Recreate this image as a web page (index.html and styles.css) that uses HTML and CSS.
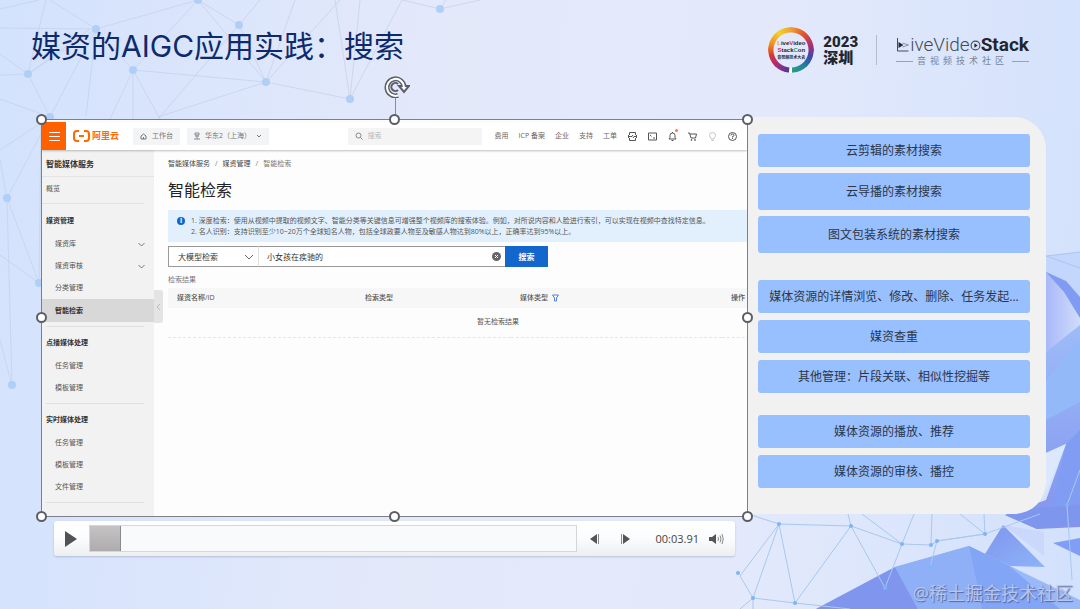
FILE: index.html
```
<!DOCTYPE html>
<html lang="zh-CN">
<head>
    <meta charset="UTF-8">
    <meta name="viewport" content="width=device-width, initial-scale=1">
    <title>媒资的AIGC应用实践：搜索</title>
    <link rel="stylesheet" href="styles.css">
</head>
<body>
    <!-- 背景装饰 -->
    <svg class="backdrop" viewBox="0 0 1080 609" preserveAspectRatio="none" aria-hidden="true">
        <defs>
            <linearGradient id="poly1" x1="0" y1="0" x2="1" y2="1">
                <stop offset="0" stop-color="#8094ee"/>
                <stop offset="1" stop-color="#8db4f8"/>
            </linearGradient>
            <linearGradient id="poly2" x1="0" y1="0" x2="1" y2="0">
                <stop offset="0" stop-color="#a9b9f7"/>
                <stop offset="1" stop-color="#d0dcfb"/>
            </linearGradient>
            <linearGradient id="poly3" x1="0" y1="0" x2="0" y2="1">
                <stop offset="0" stop-color="#9dbcf8"/>
                <stop offset="1" stop-color="#8393ee"/>
            </linearGradient>
        </defs>
        <g class="net">
            <path d="M0 9L39 0M0 28L96 29L198 0M96 29L50 0M96 29L133 70M96 29L28 74L46 0M28 74L0 75M28 74L0 54M28 74L50 117L0 99M28 74L90 29M96 29L52 113M86 116L96 29M133 70L110 119M133 70V119M133 70L160 119M133 70L266 82L350 99L335 0M198 0L239 25L158 119M239 25L260 0M198 0L133 70M239 25L266 82L295 0M266 82L340 0M266 82L158 117M350 99L360 0M350 99L402 0M266 82L198 0M402 0L440 9L480 0M440 9L446 0M50 117L0 150M50 117L7 198L0 160M7 198L39 283L0 255M7 198L12 385L0 340M39 283L41 119"/>
        </g>
        <g class="net-dot">
            <circle cx="198" cy="0" r="4"/><circle cx="96" cy="29" r="4"/><circle cx="239" cy="25" r="4"/>
            <circle cx="28" cy="74" r="4"/><circle cx="133" cy="70" r="4"/><circle cx="266" cy="82" r="4"/>
            <circle cx="350" cy="99" r="4"/><circle cx="50" cy="117" r="4"/><circle cx="440" cy="9" r="4"/>
            <circle cx="7" cy="198" r="4"/><circle cx="39" cy="283" r="4"/><circle cx="12" cy="385" r="4"/>
        </g>
        <g>
            <path fill="#c3d6fb" d="M1046 256L1080 252V360L1046 352Z"/>
            <path fill="url(#poly2)" d="M1046 272L1062 280L1080 300V330L1046 352Z"/>
            <path fill="#7f9cf2" d="M1046 272L1066 281L1080 297V318L1064 292Z"/>
            <path fill="url(#poly3)" d="M1046 352L1080 325V527L1037 529L1005 515L1046 500L1066 444L1046 453Z"/>
            <path fill="#94b9f9" d="M1046 380L1080 340V402L1046 420Z"/>
            <path fill="#809df3" d="M1066 444L1080 430V500L1050 516Z"/>
            <path fill="#dbe8fd" d="M1046 453L1066 444L1046 492Z"/>
            <path fill="#7f96ee" d="M1005 515L1037 529L1080 522V505L1040 508Z"/>
            <path fill="#7e9ff5" d="M1053 543L1080 538V556Z"/>
            <path fill="#9ab9f9" d="M816 609L895 567L969 546L1008 565L1080 600V609Z"/>
            <path fill="#8096ee" d="M816 609L895 567L918 609Z"/>
            <path fill="#8fb0f7" d="M895 567L969 546L982 609H918Z"/>
            <path fill="#83a5f5" d="M969 546L1008 565L1060 609H982Z"/>
            <path fill="url(#poly1)" d="M1003 525L1045 567L1010 566L985 554Z"/>
            <path fill="#c9d8fb" d="M1003 525L1044 532V556Z"/>
        </g>
        <g class="mesh">
            <path d="M1080 252L1046 256M1080 268L1046 256M779 524L851 526L902 544L931 545L937 541L985 534L960 514M779 524L795 603L851 526L885 588M779 524L740 576L753 598V609M753 598L795 603L850 609M753 598L740 609M851 526L848 514M902 544L862 514M902 544L914 514M931 545L932 514M985 534L984 514M985 534L937 541L930 567M985 534L1040 514M902 544L885 588M937 541L931 545M753 598L779 524L748 514M1067 505L1072 580M1067 505L1080 470"/>
        </g>
        <g class="mesh-dot">
            <circle cx="779" cy="524" r="2"/><circle cx="851" cy="526" r="2"/><circle cx="902" cy="544" r="2"/>
            <circle cx="931" cy="545" r="2"/><circle cx="937" cy="541" r="2"/><circle cx="985" cy="534" r="2"/>
            <circle cx="930" cy="567" r="2"/><circle cx="885" cy="588" r="2"/><circle cx="753" cy="598" r="2"/>
            <circle cx="795" cy="603" r="2"/><circle cx="738" cy="573" r="2"/><circle cx="1067" cy="505" r="2"/>
        </g>
    </svg>

    <div class="slide">
        <header class="slide-header">
            <h1>媒资的AIGC应用实践：搜索</h1>
            <div class="brands">
                <div class="con-logo">
                    <span class="ring"></span>
                    <span class="con-text"><i class="c1">L</i>ive<i class="c2">V</i>ideo<br><i class="c3">S</i>tack<i class="c4">C</i>on<br><small>音视频技术大会</small></span>
                </div>
                <div class="year">2023<br>深圳</div>
                <div class="lvs">
                    <div class="lvs-name">
                        <svg width="14" height="14" viewBox="0 0 13 14" fill="none" stroke="#444b5a">
                            <path d="M1 0V13H12"/>
                            <path d="M2 4L7 7L2 10Z" fill="#222936" stroke="none"/>
                            <path d="M6 5L12 7L6 9" stroke="#8a92a2"/>
                        </svg>
                        <span>iveVide</span>
                        <svg width="11" height="11" viewBox="0 0 10 10" fill="none" stroke="#444b5a">
                            <circle cx="5" cy="5" r="4"/>
                            <path d="M4 3L7 5L4 7Z" fill="#222936" stroke="none"/>
                        </svg>
                        <b>Stack</b>
                    </div>
                    <div class="lvs-sub">音视频技术社区</div>
                </div>
            </div>
        </header>

        <main class="slide-body">
            <section class="video">
                <div class="frame">
                    <div class="app">
                        <div class="topbar">
                            <button class="menu" aria-label="菜单"><i></i><i></i><i></i></button>
                            <a href="#" class="aliyun">
                                <svg width="17" height="12" viewBox="0 0 17 12" fill="none" stroke="#ff6a00" stroke-width="2">
                                    <path d="M6 1H4Q1 1 1 4V8Q1 11 4 11H6M11 1H13Q16 1 16 4V8Q16 11 13 11H11M6 6H11"/>
                                </svg>
                                阿里云
                            </a>
                            <button class="chip">
                                <svg width="7" height="7" viewBox="0 0 7 7" fill="none" stroke="#777"><path d="M1 3L3.500 1L6 3V6H1ZM3.500 4V6"/></svg>
                                工作台
                            </button>
                            <button class="chip region">
                                <svg width="6" height="8" viewBox="0 0 6 8" fill="none" stroke="#888"><path d="M1 1H5V3H1ZM1 4H5M3 4V7M0 7H6"/></svg>
                                华东2（上海）
                                <svg width="6" height="4" viewBox="0 0 6 4" fill="none" stroke="#777"><path d="M1 1L3 3L5 1"/></svg>
                            </button>
                            <label class="top-search">
                                <svg width="8" height="8" viewBox="0 0 8 8" fill="none" stroke="#888"><circle cx="3.500" cy="3.500" r="2.500"/><path d="M5.500 5.500L7.500 7.500"/></svg>
                                <input type="text" placeholder="搜索" aria-label="搜索">
                            </label>
                            <nav class="top-links">
                                <a href="#">费用</a>
                                <a href="#">ICP 备案</a>
                                <a href="#">企业</a>
                                <a href="#">支持</a>
                                <a href="#">工单</a>
                            </nav>
                            <div class="top-icons">
                                <svg viewBox="0 0 9 9"><path d="M1.500 3V.5H7.500V3M1.500 6V8.500H7.500V6M0 4.500H4L5 3M9 4.500H6L5 6M.5 3V6M8.500 3V6"/></svg>
                                <svg viewBox="0 0 9 9"><path d="M.5 1H8.500V8H.5ZM2 3L3.500 4.500M5 6H7"/></svg>
                                <span class="bell"><svg viewBox="0 0 9 9"><path d="M4.500 0V1M1 7H8L7 5.500V3.500Q7 1 4.500 1Q2 1 2 3.500V5.500ZM3.500 8.500H5.500"/></svg></span>
                                <svg viewBox="0 0 9 9"><path d="M0 1H1.500L3 6H7.500L8.500 2H2"/><circle cx="3.500" cy="8" r=".5"/><circle cx="7" cy="8" r=".5"/></svg>
                                <svg class="pale" viewBox="0 0 9 9"><path d="M3 6Q1.500 5 1.500 3.500Q1.500 .5 4.500 .5Q7.500 .5 7.500 3.500Q7.500 5 6 6V7H3ZM3.500 8.500H5.500"/></svg>
                                <svg viewBox="0 0 9 9"><circle cx="4.500" cy="4.500" r="4"/><path d="M3 3.500Q3 2 4.500 2Q6 2 6 3.500Q6 4.500 4.500 4.500V5.500M4.500 6V7"/></svg>
                            </div>
                        </div>

                        <div class="app-body">
                            <aside class="sidebar">
                                <h2>智能媒体服务</h2>
                                <a href="#" class="overview">概览</a>
                                <div class="side-group">
                                    <h3>媒资管理</h3>
                                    <a href="#">媒资库 <svg width="7" height="5" viewBox="0 0 7 5"><path d="M.5 1L3.500 4L6.500 1"/></svg></a>
                                    <a href="#">媒资审核 <svg width="7" height="5" viewBox="0 0 7 5"><path d="M.5 1L3.500 4L6.500 1"/></svg></a>
                                    <a href="#">分类管理</a>
                                    <a href="#" class="active">智能检索</a>
                                </div>
                                <div class="side-group">
                                    <h3>点播媒体处理</h3>
                                    <a href="#">任务管理</a>
                                    <a href="#">模板管理</a>
                                </div>
                                <div class="side-group">
                                    <h3>实时媒体处理</h3>
                                    <a href="#">任务管理</a>
                                    <a href="#">模板管理</a>
                                    <a href="#">文件管理</a>
                                </div>
                                <button class="collapse" aria-label="收起">
                                    <svg width="5" height="8" viewBox="0 0 5 8"><path d="M4 1L1 4L4 7"/></svg>
                                </button>
                            </aside>

                            <div class="content">
                                <nav class="crumbs"><a href="#">智能媒体服务</a><span>/</span><a href="#">媒资管理</a><span>/</span>智能检索</nav>
                                <h2>智能检索</h2>
                                <div class="notice">
                                    <span class="info">i</span>
                                    <p>1. 深度检索：使用从视频中提取的视频文字、智能分类等关键信息可增强整个视频库的搜索体验。例如，对所说内容和人脸进行索引，可以实现在视频中查找特定信息。<br>2. 名人识别：支持识别至少10~20万个全球知名人物，包括全球政要人物至及敏感人物达到80%以上，正确率达到95%以上。</p>
                                </div>
                                <form class="query">
                                    <select aria-label="检索方式"><option>大模型检索</option></select>
                                    <div class="query-box">
                                        <input type="text" value="小女孩在疾驰的" aria-label="检索内容">
                                        <button type="reset" aria-label="清空">
                                            <svg width="9" height="9" viewBox="0 0 9 9"><circle cx="4.500" cy="4.500" r="4.500" fill="#666"/><path d="M3 3L6 6M6 3L3 6" stroke="#fff"/></svg>
                                        </button>
                                    </div>
                                    <button type="button" class="go">搜索</button>
                                </form>
                                <p class="result-label">检索结果</p>
                                <table>
                                    <thead>
                                        <tr>
                                            <th class="col-name">媒资名称/ID</th>
                                            <th class="col-kind">检索类型</th>
                                            <th class="col-media">媒体类型 <svg width="7" height="8" viewBox="0 0 7 8"><path d="M.5 1H6.500L4.500 4V7H2.500V4Z"/></svg></th>
                                            <th>操作</th>
                                        </tr>
                                    </thead>
                                    <tbody>
                                        <tr><td colspan="4">暂无检索结果</td></tr>
                                    </tbody>
                                </table>
                            </div>
                        </div>
                    </div>

                    <!-- 选中框控制点 -->
                    <i class="stem"></i>
                    <svg class="rotate" width="26" height="22" viewBox="0 0 26 22" fill="none">
                        <path d="M20 11A8.500 8.500 0 1 0 14 19.500" stroke="#5b5e66" stroke-width="5"/>
                        <path d="M15 10L25 10L20 16Z" fill="#fff" stroke="#5b5e66" stroke-width="2"/>
                        <path d="M20 11A8.500 8.500 0 1 0 14 19.500" stroke="#fff" stroke-width="2"/>
                        <path d="M14 8A4 4 0 1 0 14 14" stroke="#5b5e66" stroke-width="2"/>
                    </svg>
                    <i class="handle t l"></i><i class="handle t c"></i><i class="handle t r"></i>
                    <i class="handle m l"></i><i class="handle m r"></i>
                    <i class="handle b l"></i><i class="handle b c"></i><i class="handle b r"></i>
                </div>

                <div class="player">
                    <button aria-label="播放"><svg width="14" height="18" viewBox="0 0 14 18"><path d="M1 1L13 9L1 17Z" fill="#505256"/></svg></button>
                    <div class="track"><div class="played"></div></div>
                    <button class="step" aria-label="上一帧"><svg width="10" height="10" viewBox="0 0 10 10"><path d="M0 5L7 0V10Z" fill="#555"/><path d="M8.500 0V10" stroke="#888"/></svg></button>
                    <button class="step" aria-label="下一帧"><svg width="10" height="10" viewBox="0 0 10 10"><path d="M10 5L3 0V10Z" fill="#555"/><path d="M1.500 0V10" stroke="#888"/></svg></button>
                    <span class="time">00:03.91</span>
                    <button aria-label="音量"><svg width="15" height="12" viewBox="0 0 15 12" fill="none" stroke="#888"><path d="M0 4H3L7 1V11L3 8H0Z" fill="#555" stroke="none"/><path d="M9 4Q10 6 9 8M11 2.500Q13 6 11 9.500M13 1Q15.500 6 13 11"/></svg></button>
                </div>
            </section>

            <aside class="panel">
                <ul class="dense">
                    <li>云剪辑的素材搜索</li>
                    <li class="tall">云导播的素材搜索</li>
                    <li class="tall">图文包装系统的素材搜索</li>
                </ul>
                <ul>
                    <li>媒体资源的详情浏览、修改、删除、任务发起...</li>
                    <li>媒资查重</li>
                    <li>其他管理：片段关联、相似性挖掘等</li>
                </ul>
                <ul>
                    <li>媒体资源的播放、推荐</li>
                    <li>媒体资源的审核、播控</li>
                </ul>
            </aside>
        </main>

        <div class="watermark">@稀土掘金技术社区</div>
    </div>
</body>
</html>
```
FILE: styles.css
```
* {
    box-sizing: border-box;
    margin: 0;
    padding: 0;
}
body {
    font-family: "Open Sans", "Noto Sans CJK SC", sans-serif;
    min-height: 100vh;
    background: linear-gradient(95deg, #d3e2fd, #e4e9fa 40%, #e3e9fb 70%, #d2e1fc);
    color: #333;
    position: relative;
    overflow: hidden;
}
button,
input,
select {
    font: inherit;
    color: inherit;
    border: none;
    background: none;
    outline: none;
}
a {
    color: inherit;
    text-decoration: none;
}
ul {
    list-style: none;
}
svg {
    display: block;
    flex: none;
}

/* 背景 */
.backdrop {
    position: absolute;
    inset: 0;
    width: 100%;
    height: 100%;
}
.net {
    fill: none;
    stroke: #c3d0e8;
    stroke-opacity: 0.7;
}
.net-dot {
    fill: #b0cff8;
}
.mesh {
    fill: none;
    stroke: #a9c8ee;
}
.mesh-dot {
    fill: #7cb5f5;
}

.slide {
    position: relative;
    min-height: 100vh;
    display: flex;
    flex-direction: column;
}

/* 页眉 */
.slide-header {
    display: flex;
    justify-content: space-between;
    height: 117px;
    padding: 24px 51px 0 31px;
}
.slide-header h1 {
    font-family: "Inter", "Noto Sans CJK SC", sans-serif;
    font-size: 30px;
    line-height: 44px;
    font-weight: 400;
    color: #0d2a6c;
}
.brands {
    display: flex;
    align-items: center;
    height: 52px;
}
.con-logo {
    position: relative;
    width: 46px;
    height: 46px;
    display: flex;
    align-items: center;
    justify-content: center;
}
.ring {
    position: absolute;
    inset: 0;
    border-radius: 50%;
    background: conic-gradient(#f0a030, #e0502c 40deg, #a0307c 80deg, #3a4aa8 110deg, #1f86a0 145deg, #2c9c80 176deg, #fff 177deg, #fff 184deg, #4d3a98 186deg, #a82c7c 225deg, #d8382c 255deg, #f08a20 285deg, #f2d22c 325deg, #f0a030);
    -webkit-mask: radial-gradient(circle, transparent 17px, #000 18px);
    mask: radial-gradient(circle, transparent 17px, #000 18px);
}
.con-text {
    font: 700 6px/7px "Liberation Sans", sans-serif;
    text-align: center;
    color: #1f2630;
}
.con-text i {
    font-style: normal;
}
.con-text small {
    display: block;
    font: 700 4px/6px "Noto Sans CJK SC", sans-serif;
}
.c1 { color: #f0a030; }
.c2 { color: #d8382c; }
.c3 { color: #c02c5c; }
.c4 { color: #2c9c80; }
.year {
    margin-left: 9px;
    font: 900 15px/16px "Roboto", "Noto Sans CJK SC", sans-serif;
    color: #1f2630;
    white-space: nowrap;
}
.lvs {
    margin-left: 18px;
    padding-left: 19px;
    border-left: 1px solid #b2bccd;
    height: 30px;
}
.lvs-name {
    display: flex;
    align-items: center;
    font: 300 19px/20px "Roboto", sans-serif;
    color: #444b5a;
}
.lvs-name b {
    font-weight: 700;
    color: #1f2630;
}
.lvs-sub {
    display: flex;
    align-items: center;
    gap: 4px;
    font-size: 9px;
    line-height: 12px;
    letter-spacing: 4px;
    white-space: nowrap;
    color: #7a8496;
}
.lvs-sub::before,
.lvs-sub::after {
    content: "";
    flex: 1;
    border-top: 1px solid #98a2b4;
}

/* 主体 */
.slide-body {
    display: grid;
    grid-template-columns: 1fr 298px;
    align-items: start;
    padding: 0 34px 0 41px;
}
.video {
    position: relative;
    z-index: 1;
    padding-top: 2px;
}
.frame {
    position: relative;
    aspect-ratio: 707 / 398;
    border: 1px solid #7d8088;
    background: #fdfdfd;
}
.app {
    height: 100%;
    padding-top: 2px;
    display: flex;
    flex-direction: column;
    overflow: hidden;
    font-size: 7px;
    line-height: 12px;
    color: #555;
}
.topbar {
    display: flex;
    align-items: center;
    flex: none;
    height: 28px;
    padding-right: 10px;
    background: #fff;
    box-shadow: 0 1px 2px rgba(0, 0, 0, 0.25);
    position: relative;
    z-index: 1;
}
.menu {
    width: 24px;
    height: 28px;
    display: flex;
    flex-direction: column;
    align-items: center;
    justify-content: center;
    gap: 3px;
    background: #ff6000;
}
.menu i {
    width: 11px;
    height: 1px;
    background: #fff;
}
.aliyun {
    display: flex;
    align-items: center;
    gap: 2px;
    margin: 0 14px 0 7px;
    font-size: 9px;
    font-weight: 700;
    color: #ff6a00;
}
.chip {
    display: flex;
    align-items: center;
    gap: 5px;
    height: 17px;
    padding: 0 7px;
    margin-right: 7px;
    background: #f3f4f5;
    color: #777;
    white-space: nowrap;
}
.top-search {
    display: flex;
    align-items: center;
    gap: 5px;
    width: 134px;
    height: 17px;
    padding: 0 7px;
    margin-left: auto;
    background: #f4f4f5;
}
.top-search input {
    width: 100%;
}
.top-search input::placeholder {
    color: #bbb;
}
.top-links {
    display: flex;
    gap: 10px;
    margin: 0 11px 0 13px;
    white-space: nowrap;
    color: #666;
}
.top-icons {
    display: flex;
    align-items: center;
    gap: 11px;
}
.top-icons svg {
    width: 9px;
    height: 9px;
    fill: none;
    stroke: #555;
}
.top-icons .pale {
    stroke: #c4c4c4;
}
.bell {
    position: relative;
}
.bell::after {
    content: "";
    position: absolute;
    top: -3px;
    right: -1px;
    width: 3px;
    height: 3px;
    border-radius: 50%;
    background: #ff7a2c;
}
.app-body {
    display: flex;
    flex: 1;
    min-height: 0;
}

/* 侧栏 */
.sidebar {
    position: relative;
    width: 112px;
    flex: none;
    background: #f2f2f2;
}
.sidebar h2 {
    height: 27px;
    padding-left: 4px;
    font-size: 8px;
    line-height: 27px;
    color: #333;
    border-bottom: 1px solid #e4e4e4;
}
.overview {
    display: block;
    height: 27px;
    margin-right: 10px;
    padding-left: 4px;
    line-height: 23px;
    border-bottom: 1px solid #e2e2e2;
}
.side-group {
    padding: 5px 0 4px;
}
.side-group::after {
    content: "";
    display: block;
    margin: 4px 10px -5px 4px;
    border-top: 1px solid #e0e0e0;
}
.side-group h3 {
    padding-left: 4px;
    font-size: 7px;
    line-height: 24px;
    color: #333;
}
.side-group a {
    display: flex;
    align-items: center;
    justify-content: space-between;
    height: 22px;
    padding: 0 9px 0 13px;
}
.side-group a svg {
    fill: none;
    stroke: #777;
}
.side-group .active {
    height: 23px;
    background: #d8d8d8;
    font-weight: 700;
    color: #333;
}
.collapse {
    position: absolute;
    left: 100%;
    top: 140px;
    width: 9px;
    height: 33px;
    border-radius: 0 3px 3px 0;
    background: #e4e4e4;
    display: flex;
    align-items: center;
    justify-content: center;
}
.collapse svg {
    fill: none;
    stroke: #bbb;
}

/* 内容区 */
.content {
    flex: 1;
    min-width: 0;
    padding: 8px 0 0 14px;
}
.crumbs {
    color: #777;
}
.crumbs a {
    color: #444;
}
.crumbs span {
    margin: 0 5px;
}
.content h2 {
    margin-top: 8px;
    font-size: 16px;
    line-height: 24px;
    font-weight: 400;
    color: #222;
}
.notice {
    display: flex;
    gap: 6px;
    height: 32px;
    margin-top: 8px;
    padding: 5px 0 0 9px;
    background: #e2f0fd;
    white-space: nowrap;
}
.notice p {
    line-height: 11px;
}
.info {
    flex: none;
    width: 8px;
    height: 8px;
    margin-top: 2px;
    border-radius: 50%;
    background: #1664cc;
    color: #fff;
    font-size: 7px;
    line-height: 8px;
    font-weight: 700;
    text-align: center;
}
.query {
    display: flex;
    height: 21px;
    margin-top: 4px;
    font-size: 8px;
    color: #333;
}
.query select {
    width: 91px;
    padding-left: 9px;
    appearance: none;
    border: 1px solid #999;
    border-right-color: #e0e0e0;
    background: #fff url("data:image/svg+xml,%3Csvg xmlns='http://www.w3.org/2000/svg' width='10' height='6' fill='none' stroke='%23666'%3E%3Cpath d='M1 1L5 5L9 1'/%3E%3C/svg%3E") no-repeat right 4px center;
}
.query-box {
    display: flex;
    align-items: center;
    width: 246px;
    padding: 0 4px 0 8px;
    border: 1px solid #999;
    border-width: 1px 0;
    background: #fff;
}
.query-box input {
    flex: 1;
    min-width: 0;
}
.go {
    width: 43px;
    background: #1366cc;
    color: #fff;
    font-weight: 700;
}
.result-label {
    margin-top: 7px;
    color: #777;
}
table {
    width: 114%;
    margin-top: 2px;
    table-layout: fixed;
    border-collapse: collapse;
}
th {
    height: 20px;
    padding-left: 9px;
    text-align: left;
    font-weight: 500;
    background: #f7f7f7;
}
th svg {
    display: inline-block;
    vertical-align: middle;
    margin-left: 2px;
    fill: none;
    stroke: #4a86dc;
}
.col-name { width: 188px; }
.col-kind { width: 155px; }
.col-media { width: 211px; }
td {
    height: 29px;
    text-align: center;
    border-bottom: 1px dashed #e6e6e6;
}

/* 选中框 */
.handle {
    position: absolute;
    z-index: 2;
    width: 11px;
    height: 11px;
    margin: -6px;
    border: 2px solid #5b5e66;
    border-radius: 50%;
    background: #fff;
}
.t { top: 0; }
.m { top: 50%; }
.b { top: calc(100% + 1px); }
.l { left: 0; }
.c { left: 50%; }
.r { left: calc(100% + 1px); }
.stem {
    position: absolute;
    bottom: 100%;
    left: 50%;
    width: 1px;
    height: 24px;
    background: #8a8d95;
}
.rotate {
    position: absolute;
    bottom: calc(100% + 22px);
    left: 50%;
    margin-left: -11px;
}

/* 播放条 */
.player {
    display: flex;
    align-items: center;
    height: 35px;
    margin: 4px 13px 0;
    padding: 0 11px 0 10px;
    border-radius: 3px;
    background: linear-gradient(#fff, #fbfcfd 50%, #eceeef);
    box-shadow: 0 1px 2px rgba(90, 100, 130, 0.3);
}
.track {
    flex: 1;
    height: 27px;
    margin: 0 13px 0 11px;
    border: 1px solid #d4d7da;
    background: #f8fafc;
}
.played {
    width: 31px;
    height: 100%;
    background: linear-gradient(#c6c3c4, #aeabac);
    border-right: 1px solid #8a8a8a;
}
.step {
    margin-right: 20px;
}
.time {
    margin: 0 10px 0 5px;
    font-size: 11px;
    color: #444;
}

/* 右侧能力列表 */
.panel {
    display: flex;
    flex-direction: column;
    padding: 17px 16px 26px 10px;
    border-radius: 0 32px 32px 0;
    background: #f1f1f1;
}
.panel ul {
    display: flex;
    flex-direction: column;
    gap: 7px;
}
.panel ul + ul {
    margin-top: 22px;
}
.panel .dense {
    gap: 6px;
    margin-bottom: 5px;
}
.panel li {
    height: 33px;
    display: flex;
    align-items: center;
    justify-content: center;
    padding-bottom: 2px;
    border-radius: 3px;
    background: #98bffe;
    font-size: 12px;
    white-space: nowrap;
    color: #2c3648;
}
.panel .tall {
    height: 37px;
}

.watermark {
    position: absolute;
    right: 7px;
    bottom: 4px;
    font-size: 18px;
    line-height: 24px;
    color: #b4c6f2;
    text-shadow: 1px 1px 1px #56659a;
}
```
